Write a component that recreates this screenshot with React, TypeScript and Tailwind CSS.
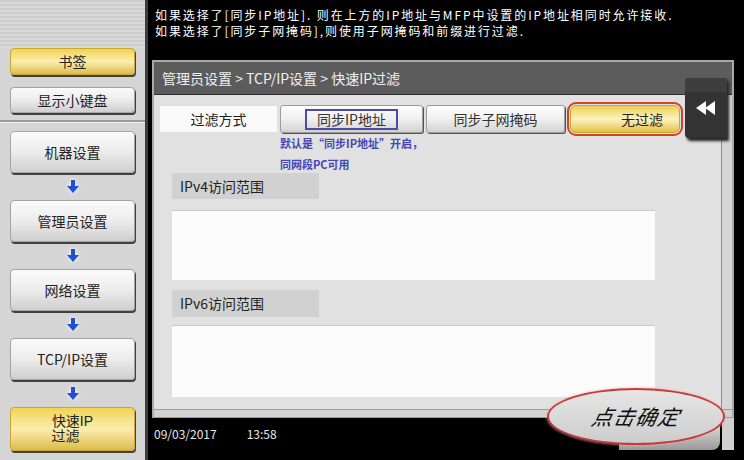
import type { ReactNode } from "react";

const NAV = ["机器设置", "管理员设置", "网络设置", "TCP/IP设置"];

const DownArrow = () => (
  <svg width="14" height="14" viewBox="0 0 14 14" className="drop-shadow-[0_0_2px_#ffffff]">
    <rect x="5" y="0" width="4" height="7" fill="#1f4fd6" />
    <path d="M1 6 H13 L7 13 Z" fill="#1f4fd6" />
  </svg>
);

const SideButton = ({
  children,
  yellow,
  className,
}: {
  children: ReactNode;
  yellow?: boolean;
  className?: string;
}) => (
  <div
    className={`mx-[10px] flex items-center justify-center rounded-[4px] border text-center text-[14px] leading-[15px] text-[#222] shadow-[1px_2px_0_#404040] ${
      yellow
        ? "border-[#c9a730] bg-gradient-to-b from-[#f1d34c] via-[#fbeeae] to-[#dcbc45]"
        : "border-[#a4a4a4] bg-gradient-to-b from-[#fbfbfb] via-[#ececec] to-[#cfcfcf]"
    } ${className ?? ""}`}
  >
    {children}
  </div>
);

const ArrowRow = () => (
  <div className="flex h-[27px] items-center justify-center">
    <DownArrow />
  </div>
);

const TabButton = ({ children, className }: { children: ReactNode; className?: string }) => (
  <div
    className={`flex h-[28px] items-center justify-center rounded-[3px] border border-[#9c9c9c] bg-gradient-to-b from-[#fdfdfd] via-[#f0f0f0] to-[#d2d2d2] text-[14px] text-[#333] shadow-[1px_1px_0_#555] ${className ?? ""}`}
  >
    {children}
  </div>
);

export default function App() {
  return (
    <div className="relative flex h-[460px] w-[744px] overflow-hidden bg-black font-['Noto_Sans_CJK_SC','Noto_Sans',sans-serif]">
      {/* left navigation */}
      <aside className="flex w-[148px] shrink-0 flex-col border-r-[3px] border-[#3c3c3c] bg-[#d5d5d5]">
        <div className="h-[48px] bg-[repeating-linear-gradient(180deg,#cdcdcd_0px,#cdcdcd_2px,#dadada_2px,#dadada_4px)]" />
        <SideButton yellow className="h-[27px]">
          书签
        </SideButton>
        <SideButton className="mt-[12px] h-[26px]">显示小键盘</SideButton>
        <div className="mt-[7px] h-[2px] bg-[#9a9a9a]" />
        <div className="h-px bg-[#f2f2f2]" />
        <div className="h-[8px]" />
        {NAV.map((label) => (
          <div key={label}>
            <SideButton className="h-[42px]">{label}</SideButton>
            <ArrowRow />
          </div>
        ))}
        <SideButton
          yellow
          className="h-[44px] flex-col font-['Liberation_Sans','Noto_Sans_CJK_SC',sans-serif] text-[13px] leading-[15px]"
        >
          <span>快速IP</span>
          <span className="pr-[14px]">过滤</span>
        </SideButton>
      </aside>

      {/* right side */}
      <main className="flex min-w-0 flex-1 flex-col">
        <div className="h-[60px] pl-[7px] pt-[7px] text-[12px] leading-[16px] tracking-[1.9px] text-white">
          <p>如果选择了[同步IP地址]. 则在上方的IP地址与MFP中设置的IP地址相同时允许接收.</p>
          <p>如果选择了[同步子网掩码],则使用子网掩码和前缀进行过滤.</p>
        </div>

        <section className="ml-[4px] mr-[10px] flex h-[358px] flex-col border-x-2 border-t-2 border-[#a9a9a9] bg-[#e1e1e1]">
          <header className="flex h-[33px] items-center border-b border-[#2e2e2e] bg-[#5c5c5c] pl-[8px] text-[14px] text-[#f0f0f0]">
            管理员设置 &gt; TCP/IP设置 &gt; 快速IP过滤
          </header>

          <div className="flex flex-1">
            <div className="flex-1 pl-[6px] pt-[7px]">
              <div className="flex items-center">
                <div className="flex h-[26px] w-[117px] items-center justify-center bg-[#fafafa] text-[14px] text-[#222]">
                  过滤方式
                </div>
                <TabButton className="ml-[3px] w-[143px]">
                  <span className="border-2 border-[#4b4ba8] px-[10px] leading-[17px]">同步IP地址</span>
                </TabButton>
                <TabButton className="ml-[3px] w-[139px]">同步子网掩码</TabButton>
                <div className="ml-[2px] rounded-[9px] border-2 border-[#d2402e] p-px">
                  <div className="flex h-[28px] w-[110px] items-center justify-end rounded-[6px] border border-[#c9a730] bg-gradient-to-b from-[#ecd04a] via-[#fbf3bd] to-[#e2c23e] pr-[16px] text-[14px] text-[#222]">
                    无过滤
                  </div>
                </div>
              </div>

              <div className="-mt-[3px] ml-[120px] h-[40px] text-[11px] font-bold leading-[21px] text-[#4646b8]">
                <p>默认是“同步IP地址”开启，</p>
                <p>同网段PC可用</p>
              </div>

              <div className="ml-[12px]">
                <div className="flex h-[26px] w-[147px] items-center bg-[#d1d1d1] pl-[8px] text-[14px] text-[#222]">
                  IPv4访问范围
                </div>
                <div className="mt-[11px] h-[70px] w-[483px] border-t border-[#c9c9c9] bg-[#fcfcfc]" />
                <div className="mt-[10px] flex h-[27px] w-[147px] items-center bg-[#d1d1d1] pl-[8px] text-[14px] text-[#222]">
                  IPv6访问范围
                </div>
                <div className="mt-[8px] h-[72px] w-[483px] border-t border-[#c9c9c9] bg-[#fcfcfc]" />
              </div>
            </div>
            <div className="w-[11px] border-l border-[#8c8c8c] bg-[#d6d6d6]" />
          </div>

          <div className="h-[9px] border-y border-[#9a9a9a] bg-[#d2d2d2]" />
        </section>

        <footer className="flex flex-1 pl-[6px] pr-[10px]">
          <div className="flex gap-[30px] pt-[7px] text-[12px] text-[#e8e8e8]">
            <span>09/03/2017</span>
            <span>13:58</span>
          </div>
          <div className="flex-1" />
          <div className="mt-[8px] h-[24px] w-[101px] rounded-br-[8px] bg-gradient-to-b from-[#d8d8d8] to-[#9a9a9a]" />
          <div className="ml-[2px] h-[32px] w-[12px] bg-[#d0d0d0]" />
        </footer>
      </main>

      {/* collapse tab overlay */}
      <div className="absolute left-[685px] top-[78px] flex h-[60px] w-[42px] flex-col overflow-hidden rounded-l-[4px] bg-[#333] shadow-[2px_3px_3px_#222]">
        <div className="h-[14px] bg-[#3e3e3e]" />
        <div className="flex flex-1 items-start justify-center pt-[8px]">
          <svg width="22" height="16" viewBox="0 0 22 16">
            <path d="M1 8 L11 1 V15 Z" fill="#fafafa" />
            <path d="M10 8 L20 1 V15 Z" fill="#fafafa" />
          </svg>
        </div>
      </div>

      {/* annotation ellipse */}
      <div className="absolute left-[547px] top-[388px] flex h-[57px] w-[178px] items-center justify-center rounded-[50%] border-2 border-[#c63a3a] bg-gradient-to-b from-[#e6e6e6] to-[#cdcdcd] shadow-[0_0_3px_#f0b0b0]">
        <span className="-skew-x-12 text-[21px] italic tracking-[1px] text-[#111]">点击确定</span>
      </div>
    </div>
  );
}
